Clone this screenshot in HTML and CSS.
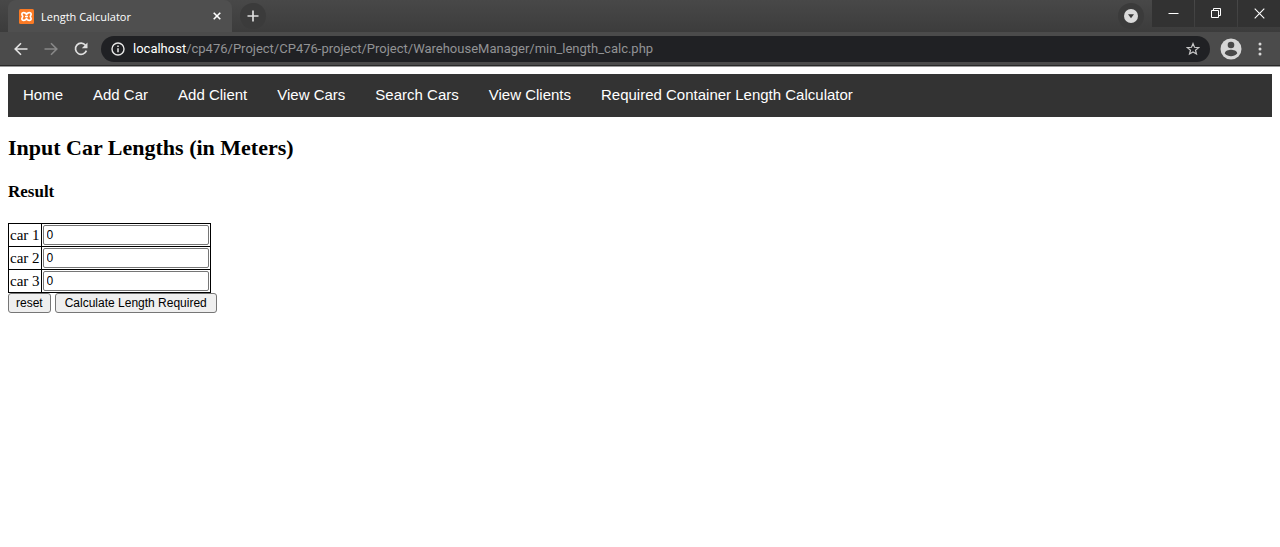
FILE: index.html
```
<!DOCTYPE html>
<html lang="en">
<head>
<meta charset="utf-8">
<title>Length Calculator</title>
<link rel="stylesheet" href="styles.css">
</head>
<body>
<header class="browser">
  <div class="tabstrip">
    <div class="tab">
      <svg class="favicon" width="15" height="15" viewBox="0 0 15 15" aria-hidden="true"><rect width="15" height="15" rx="1.500" fill="#fb7a24"/><path d="M7.500 5.500C6.800 3.200 2.900 2.800 2.900 5.200c0 1.200.8 1.600.8 2.300S2.900 8.600 2.900 9.800c0 2.400 3.900 2 4.600-.3.700 2.300 4.600 2.700 4.600.3 0-1.200-.8-1.600-.8-2.300s.8-1.100.8-2.300c0-2.400-3.900-2-4.600.3zM6 7.500h3" fill="none" stroke="#fff" stroke-width="1.700" stroke-linejoin="round"/></svg>
      <span class="tab-title">Length Calculator</span>
      <button class="icon-btn tab-close" aria-label="Close tab"><svg width="8" height="8" viewBox="0 0 8 8"><path d="M.7.7l6.600 6.600M7.300.7L.7 7.300" stroke="#fff" stroke-width="1.600"/></svg></button>
    </div>
    <button class="icon-btn round-btn" aria-label="New tab"><svg width="12" height="12" viewBox="0 0 12 12"><path d="M6 .5v11M.5 6h11" stroke="#dedede" stroke-width="1.700"/></svg></button>
    <button class="icon-btn round-btn tab-search" aria-label="Search tabs"><svg width="14" height="14" viewBox="0 0 14 14"><circle cx="7" cy="7" r="7" fill="#dadada"/><path d="M4 5.300h6L7 9.300z" fill="#393939"/></svg></button>
    <div class="window-controls">
      <button class="icon-btn" aria-label="Minimize"><svg width="11" height="11" viewBox="0 0 11 11"><path d="M.5 5.500h10" stroke="#fff"/></svg></button>
      <button class="icon-btn" aria-label="Restore"><svg width="11" height="11" viewBox="0 0 11 11"><path d="M.5 2.500h7v7h-7zM2.500 2.500v-2h7v7h-2" fill="none" stroke="#fff"/></svg></button>
      <button class="icon-btn" aria-label="Close"><svg width="11" height="11" viewBox="0 0 11 11"><path d="M.7.7l9.600 9.600M10.300.7L.7 10.300" stroke="#fff" stroke-width="1.100"/></svg></button>
    </div>
  </div>
  <div class="toolbar">
    <button class="icon-btn" aria-label="Back"><svg width="14" height="14" viewBox="0 0 14 14"><path d="M13.500 7H1.500M7 1.200L1.200 7 7 12.800" fill="none" stroke="#e4e4e4" stroke-width="1.600"/></svg></button>
    <button class="icon-btn" aria-label="Forward"><svg width="14" height="14" viewBox="0 0 14 14"><path d="M.5 7h12M7 1.200L12.800 7 7 12.800" fill="none" stroke="#888" stroke-width="1.600"/></svg></button>
    <button class="icon-btn" aria-label="Reload"><svg width="14" height="14" viewBox="0 0 14 14"><path d="M11.500 3.300A5.600 5.600 0 1 0 12.400 8.600" fill="none" stroke="#e0e0e0" stroke-width="1.700"/><path d="M13.500.6v5.700H7.800z" fill="#e0e0e0"/></svg></button>
    <div class="address">
      <svg width="14" height="14" viewBox="0 0 14 14" aria-hidden="true"><circle cx="7" cy="7" r="6" fill="none" stroke="#e8e8e8" stroke-width="1.400"/><path d="M7 6.200v4M7 3.500v1.500" stroke="#e8e8e8" stroke-width="1.500"/></svg>
      <span class="url"><span class="host">localhost</span>/cp476/Project/CP476-project/Project/WarehouseManager/min_length_calc.php</span>
      <button class="icon-btn" aria-label="Bookmark this page"><svg width="14" height="14" viewBox="0 0 14 14"><path d="M7 1.600l1.500 3.700 4.100.3-3.100 2.600 1 3.900L7 10l-3.500 2.100 1-3.900L1.400 5.600l4.100-.3z" fill="none" stroke="#c8c8c8" stroke-width="1.200"/></svg></button>
    </div>
    <button class="icon-btn profile" aria-label="Profile"><svg width="22" height="22" viewBox="0 0 22 22"><circle cx="11" cy="11" r="10.500" fill="#d6d6d6"/><circle cx="11" cy="7" r="3.300" fill="#484848"/><path d="M4.800 15.500c0-2.700 4-3.700 6.200-3.700s6.200 1 6.200 3.700C15.500 17.500 13.300 18.200 11 18.200s-4.500-.7-6.200-2.700z" fill="#484848"/></svg></button>
    <button class="icon-btn" aria-label="Menu"><svg width="4" height="14" viewBox="0 0 4 14"><g fill="#d8d8d8"><circle cx="2" cy="2" r="1.500"/><circle cx="2" cy="7" r="1.500"/><circle cx="2" cy="12" r="1.500"/></g></svg></button>
  </div>
</header>
<main class="page">
  <nav class="nav">
    <a href="#">Home</a>
    <a href="#">Add Car</a>
    <a href="#">Add Client</a>
    <a href="#">View Cars</a>
    <a href="#">Search Cars</a>
    <a href="#">View Clients</a>
    <a href="#">Required Container Length Calculator</a>
  </nav>
  <h2 class="heading">Input Car Lengths (in Meters)</h2>
  <h3 class="result">Result</h3>
  <form>
    <table class="cars">
      <tr><td><label for="car1">car 1</label></td><td><input id="car1" type="text" value="0"></td></tr>
      <tr><td><label for="car2">car 2</label></td><td><input id="car2" type="text" value="0"></td></tr>
      <tr><td><label for="car3">car 3</label></td><td><input id="car3" type="text" value="0"></td></tr>
    </table>
    <div class="actions">
      <button class="action" type="reset">reset</button>
      <button class="action calculate" type="button">Calculate Length Required</button>
    </div>
  </form>
</main>
</body>
</html>
```
FILE: styles.css
```
* { box-sizing: border-box; }
body {
  margin: 0;
  background: #fff;
  color: #000;
  font-family: "Liberation Serif", "Times New Roman", serif;
  font-size: 15px;
}
svg { display: block; flex: none; }

.browser {
  background: #4b4b4b;
  border-bottom: 1px solid #999;
  font-family: "Open Sans", "Noto Sans", sans-serif;
}
.icon-btn {
  display: flex;
  align-items: center;
  justify-content: center;
  flex: none;
  padding: 0;
  border: 0;
  background: none;
}
.tabstrip {
  display: flex;
  height: 32px;
  padding-left: 8px;
  background: linear-gradient(#484848, #3c3c3c);
}
.tab {
  display: flex;
  align-items: center;
  width: 224px;
  padding: 0 11px;
  border-radius: 8px 8px 0 0;
  background: #4f4f4f;
  color: #fff;
  font-size: 11px;
}
.tab-title { flex: 1; margin-left: 7px; }
.round-btn {
  width: 26px;
  height: 26px;
  margin: 3px 0 0 8px;
  border-radius: 50%;
  background: #3b3b3b;
}
.tab-search { margin-left: auto; }
.window-controls {
  display: flex;
  gap: 1px;
  height: 27px;
  margin-left: 8px;
}
.window-controls .icon-btn { width: 42px; background: #323232; }
.toolbar {
  display: flex;
  align-items: center;
  height: 34px;
  padding: 0 18px 0 14px;
  gap: 16px;
  border-bottom: 1px solid #292929;
}
.address {
  display: flex;
  align-items: center;
  flex: 1;
  min-width: 0;
  height: 26px;
  margin-left: -3px;
  padding: 0 10px;
  border-radius: 13px;
  background: #202124;
}
.url {
  flex: 1;
  min-width: 0;
  overflow: hidden;
  margin-left: 8px;
  color: #929395;
  font-family: Roboto, "Open Sans", sans-serif;
  font-size: 13px;
  line-height: 20px;
  white-space: nowrap;
}
.host { color: #fff; }
.profile { margin-left: -6px; }

.page { padding: 7px 8px; }
.nav {
  display: flex;
  flex-wrap: wrap;
  background: #333;
}
.nav a {
  padding: 12px 15px 13px;
  color: #fff;
  font-family: "Liberation Sans", Arial, sans-serif;
  font-size: 15px;
  line-height: 18px;
  text-decoration: none;
}
.heading { margin: 18px 0 20px; font-size: 22px; line-height: 26px; }
.result { margin: 0 0 20px; font-size: 17px; line-height: 22px; }
.cars { border-collapse: collapse; }
.cars td { padding: 1px; border: 1px solid #000; line-height: 18px; }
.cars input {
  display: block;
  width: 166px;
  height: 20px;
  padding: 0 3px;
  border: 1px solid #767676;
  border-radius: 2px;
  background: #fff;
  color: #000;
  font-family: "Liberation Sans", Arial, sans-serif;
  font-size: 12px;
}
.actions { display: flex; gap: 4px; }
.action {
  height: 20px;
  padding: 0 7px;
  border: 1px solid #767676;
  border-radius: 3px;
  background: #efefef;
  color: #000;
  font-family: "Liberation Sans", Arial, sans-serif;
  font-size: 12px;
}
.calculate { padding: 0 9px; }
```
